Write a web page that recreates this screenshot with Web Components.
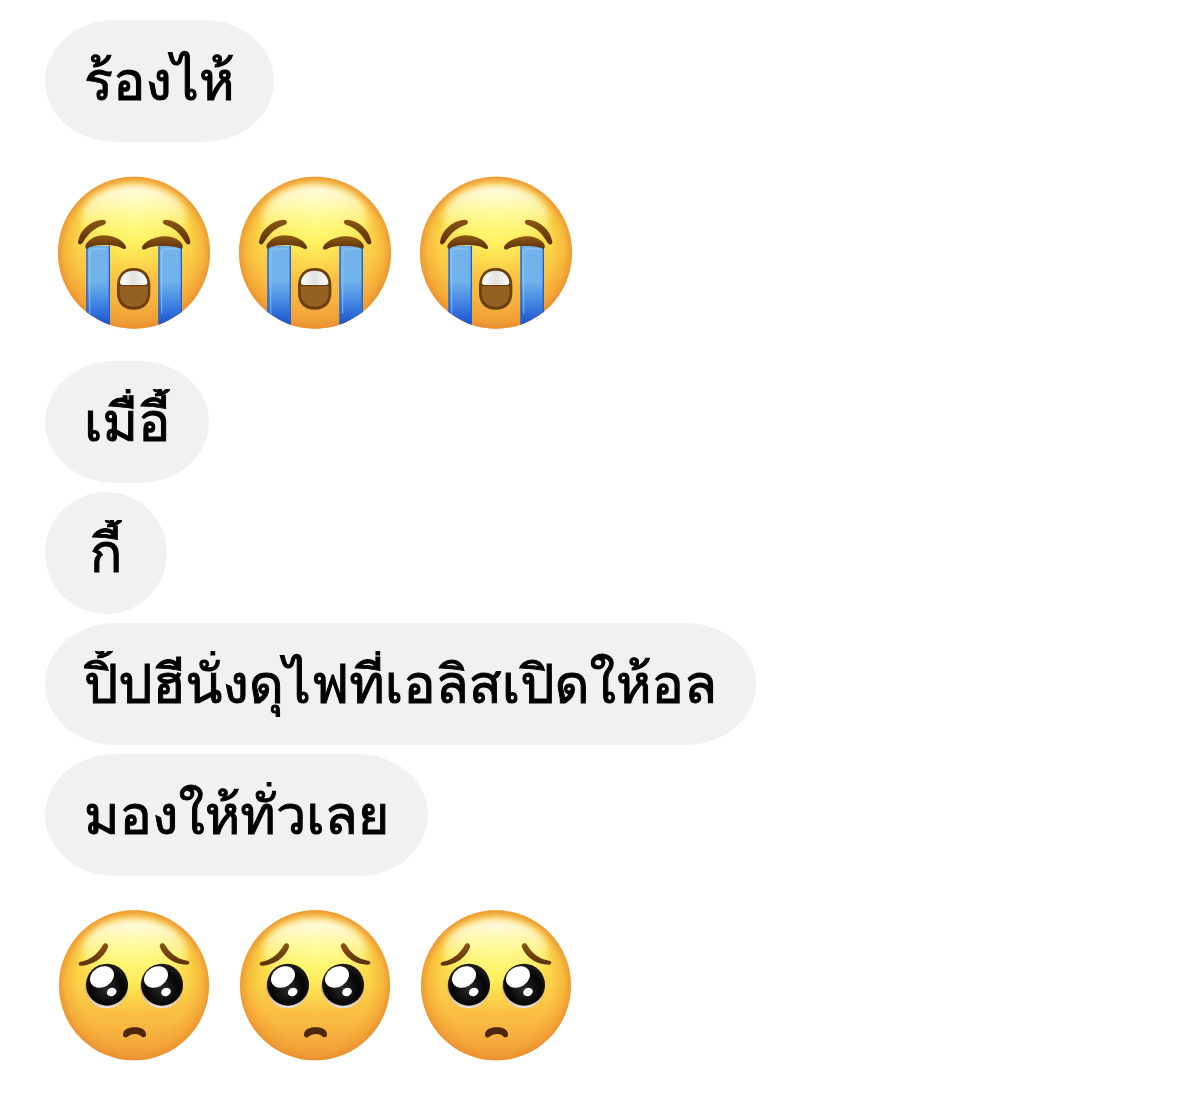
<!DOCTYPE html>
<html lang="th">
<head>
<meta charset="utf-8">
<meta name="viewport" content="width=device-width, initial-scale=1">
<title>Chat</title>
<style>
  body {
    margin: 0;
    background: #fff;
    color: #000;
    font-family: Thonburi, Loma, "Noto Sans Thai Looped", "Noto Sans", "Liberation Sans", sans-serif;
  }
</style>
</head>
<body>
<chat-thread>
  <chat-bubble>ร้องไห้</chat-bubble>
  <emoji-row name="sob" count="3"></emoji-row>
  <chat-bubble>เมื่อี้</chat-bubble>
  <chat-bubble>กี้</chat-bubble>
  <chat-bubble>ปิ้ปฮีนั่งดุไฟที่เอลิสเปิดให้อล</chat-bubble>
  <chat-bubble>มองให้ทั่วเลย</chat-bubble>
  <emoji-row name="pleading" count="3"></emoji-row>
</chat-thread>

<script>
const threadTemplate = document.createElement('template');

threadTemplate.innerHTML = /* html */`
  <style>
    :host {
      display: flex;
      flex-direction: column;
      align-items: flex-start;
      gap: 9px;
      box-sizing: border-box;
      padding: 20px 45px;
    }
  </style>
  <slot></slot>
`;

const bubbleTemplate = document.createElement('template');

bubbleTemplate.innerHTML = /* html */`
  <style>
    :host {
      display: flex;
      justify-content: center;
      box-sizing: border-box;
      min-width: 122px;
      max-width: 100%;
      padding: 28px 39px;
      border-radius: min(70px, 50%) / 50%;
      background: #f1f1f1;
    }

    /* High tone marks are cut off at the edge of the line box. */
    .text {
      overflow: hidden;
      font-size: 54px;
      line-height: 66px;
      -webkit-text-stroke: 1px currentColor;
    }
  </style>
  <div part="text" class="text"><slot></slot></div>
`;

/** Face shapes, drawn on a shared 543 unit canvas. */
const FACES = {
  sob: {
    label: 'Loudly crying face',
    radius: 228,
    cy: 277,
    art: /* svg */`
      <g fill="url(#brow)">
        <path d="M114 244C120 209 149 182 188 178C199 178 202 188 192 193C165 201 144 219 128 247C122 256 113 252 114 244Z"/>
        <path d="M451 244C445 209 416 182 378 178C367 178 365 188 375 193C402 201 421 219 437 247C443 256 452 252 451 244Z"/>
      </g>
      <g clip-path="url(#disc)">
        <path d="M140 256H209V520H140Z" fill="url(#tear)"/>
        <path d="M356 256H425V520H356Z" fill="url(#tear)"/>
        <path d="M141 256V520M208 256V520M357 256V520M424 256V520" stroke="#2462c4" stroke-width="4"/>
        <path d="M149 460V274Q151 268 161 266H200M365 460V274Q367 268 377 266H416" fill="none" stroke="#a2d7ff" stroke-opacity=".45" stroke-width="4"/>
      </g>
      <path d="M139 250C155 228 180 221 207 226C235 231 252 244 258 259C260 267 251 268 245 263C228 254 208 253 190 254C169 255 151 257 142 265C136 266 134 257 139 250Z" fill="url(#lid)"/>
      <path d="M426 250C410 230 385 225 359 229C332 234 312 246 306 260C304 268 312 270 319 265C336 256 357 257 375 257C395 258 413 260 422 265C429 266 430 257 426 250Z" fill="url(#lid)"/>
      <path d="M231 373C233 341 252 323 281 323C311 323 330 341 331 373V397C331 430 311 448 281 448C251 448 231 430 231 397Z" fill="#6b3f0e"/>
      <path d="M239 378H323V398C322 424 307 439 281 439C255 439 240 424 239 398Z" fill="#946123"/>
      <path d="M240 366C241 345 258 331 281 331C304 331 320 345 322 366Q322 374 314 374H248Q240 374 240 366Z" fill="url(#teeth)"/>
    `
  },
  pleading: {
    label: 'Pleading face',
    radius: 225,
    cy: 273,
    art: /* svg */`
      <g fill="url(#brow)">
        <path d="M189 151C195 142 207 147 204 159C191 192 158 213 124 214C114 214 113 204 123 202C153 196 174 177 189 151Z"/>
        <path d="M375 151C369 142 356 147 360 159C373 192 405 211 440 211C450 210 451 200 441 199C410 193 390 177 375 151Z"/>
      </g>
      <circle cx="200" cy="278" r="64" fill="url(#sclera)"/>
      <circle cx="365" cy="278" r="64" fill="url(#sclera)"/>
      <circle cx="201" cy="271" r="63" fill="url(#iris)"/>
      <circle cx="366" cy="271" r="63" fill="url(#iris)"/>
      <g fill="#fff">
        <ellipse cx="186" cy="248" rx="38" ry="30" transform="rotate(-32 186 248)"/>
        <ellipse cx="348" cy="248" rx="38" ry="30" transform="rotate(-32 348 248)"/>
        <ellipse cx="215" cy="293" rx="15" ry="12" transform="rotate(-25 215 293)"/>
        <ellipse cx="378" cy="293" rx="15" ry="12" transform="rotate(-25 378 293)"/>
      </g>
      <path d="M249 421C250 405 264 399 284 399C304 399 317 406 318 421C318 430 308 431 302 424C294 417 273 417 266 425C259 432 249 430 249 421Z" fill="#4e260b"/>
    `
  }
};

/**
 * Builds the SVG markup of one face.
 *
 * @param {string} name A key of FACES.
 * @returns {string} The SVG markup.
 */
const faceMarkup = name => {
  const { label, radius, cy, art } = FACES[name];

  return /* html */`
    <svg viewBox="15 2 543 543" role="img" aria-label="${label}">
      <defs>
        <linearGradient id="skin" x1="0" y1="0" x2="0" y2="1">
          <stop offset="0" stop-color="#fbc043"/>
          <stop offset=".3" stop-color="#fadc4a"/>
          <stop offset=".5" stop-color="#fbd047"/>
          <stop offset=".75" stop-color="#f9b840"/>
          <stop offset="1" stop-color="#f0a03c"/>
        </linearGradient>
        <radialGradient id="glow" cx=".5" cy=".28" r=".42">
          <stop offset="0" stop-color="#fffb72"/>
          <stop offset=".45" stop-color="#fff260" stop-opacity=".8"/>
          <stop offset="1" stop-color="#ffe04c" stop-opacity="0"/>
        </radialGradient>
        <radialGradient id="rim">
          <stop offset=".74" stop-color="#ee962c" stop-opacity="0"/>
          <stop offset=".9" stop-color="#ef972c" stop-opacity=".4"/>
          <stop offset="1" stop-color="#e98a2e" stop-opacity=".8"/>
        </radialGradient>
        <linearGradient id="shine" x1="0" y1="0" x2="0" y2="1">
          <stop offset="0" stop-color="#fffdf0" stop-opacity=".98"/>
          <stop offset=".4" stop-color="#fffcb5" stop-opacity=".75"/>
          <stop offset="1" stop-color="#fff95e" stop-opacity="0"/>
        </linearGradient>
        <filter id="soft" x="-20%" y="-20%" width="140%" height="140%">
          <feGaussianBlur stdDeviation="9"/>
        </filter>
        <linearGradient id="tear" x1="0" y1="0" x2="0" y2="1">
          <stop offset="0" stop-color="#73b2e9"/>
          <stop offset=".4" stop-color="#70b3ec"/>
          <stop offset=".65" stop-color="#4385e2"/>
          <stop offset=".88" stop-color="#1c56cf"/>
        </linearGradient>
        <linearGradient id="lid" x1="0" y1="0" x2="0" y2="1">
          <stop offset="0" stop-color="#8d5b14"/>
          <stop offset="1" stop-color="#5b2e0a"/>
        </linearGradient>
        <linearGradient id="teeth" x1="0" y1="0" x2="1" y2="0">
          <stop offset="0" stop-color="#fff"/>
          <stop offset=".5" stop-color="#e0e0dd"/>
          <stop offset="1" stop-color="#fff"/>
        </linearGradient>
        <linearGradient id="brow" x1="0" y1="0" x2="0" y2="1">
          <stop offset="0" stop-color="#8a5613"/>
          <stop offset="1" stop-color="#5b300b"/>
        </linearGradient>
        <linearGradient id="sclera" x1="0" y1="0" x2="0" y2="1">
          <stop offset=".5" stop-color="#c99b55"/>
          <stop offset="1" stop-color="#e6dfe4"/>
        </linearGradient>
        <radialGradient id="iris" cx=".5" cy=".6" r=".55">
          <stop offset="0" stop-color="#2a2a2c"/>
          <stop offset=".7" stop-color="#050506"/>
          <stop offset="1" stop-color="#1b1a19"/>
        </radialGradient>
        <clipPath id="disc"><circle cx="282" cy="${cy}" r="${radius}"/></clipPath>
      </defs>
      <circle cx="282" cy="${cy}" r="${radius}" fill="url(#skin)"/>
      <circle cx="282" cy="${cy}" r="${radius}" fill="url(#glow)"/>
      <circle cx="282" cy="${cy}" r="${radius}" fill="url(#rim)"/>
      <ellipse cx="282" cy="172" rx="158" ry="98" fill="url(#shine)" filter="url(#soft)"/>
      ${art}
    </svg>
  `;
};

/**
 * Column of messages.
 *
 * @slot - Contains the `<chat-bubble>` and `<emoji-row>` elements.
 */
class ChatThread extends HTMLElement {
  constructor() {
    super();
    this.attachShadow({ mode: 'open' });
    this.shadowRoot.appendChild(threadTemplate.content.cloneNode(true));
  }
}

/**
 * A received text message.
 *
 * @slot - The text of the message.
 * @csspart text - The line box of the text.
 */
class ChatBubble extends HTMLElement {
  constructor() {
    super();
    this.attachShadow({ mode: 'open' });
    this.shadowRoot.appendChild(bubbleTemplate.content.cloneNode(true));
  }
}

/**
 * A message of large emoji without a bubble.
 *
 * @attr name - Which face to draw.
 * @attr count - How many times it is repeated.
 */
class EmojiRow extends HTMLElement {
  constructor() {
    super();
    this.attachShadow({ mode: 'open' });
  }

  connectedCallback() {
    const count = Number(this.getAttribute('count')) || 1;

    this.shadowRoot.innerHTML = /* html */`
      <style>
        :host {
          display: flex;
          flex-wrap: wrap;
          padding: 10px 0;
        }

        svg {
          display: block;
          width: 181px;
          height: 181px;
        }
      </style>
      ${faceMarkup(this.getAttribute('name')).repeat(count)}
    `;
  }
}

window.customElements.define('chat-thread', ChatThread);
window.customElements.define('chat-bubble', ChatBubble);
window.customElements.define('emoji-row', EmojiRow);
</script>
</body>
</html>
